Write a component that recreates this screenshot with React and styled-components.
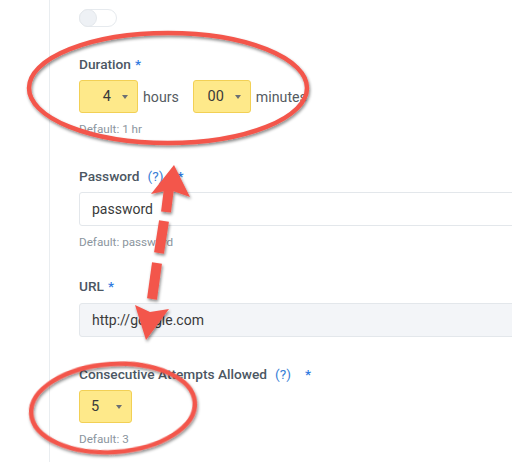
import React from 'react';
import styled, { createGlobalStyle } from 'styled-components';

const GlobalStyle = createGlobalStyle`
	body {
		margin: 0;
		background: #fff;
		font-family: Roboto, 'Liberation Sans', sans-serif;
		overflow: hidden;
	}
`;

const Page = styled.div`
	position: relative;
	width: 512px;
	height: 462px;
	display: flex;
	overflow: hidden;
`;

const Rail = styled.div`
	width: 49px;
	flex-shrink: 0;
	border-right: 1px solid #e9edf0;
`;

const Form = styled.div`
	flex: 1;
	padding: 9px 0 0 29px;
	display: flex;
	flex-direction: column;
`;

const Toggle = styled.div`
	width: 38px;
	height: 18px;
	border: 1px solid #e6eaee;
	border-radius: 10px;
	box-sizing: border-box;
	margin-bottom: 29px;
	display: flex;
	align-items: center;
`;

const Knob = styled.div`
	width: 18px;
	height: 18px;
	margin-left: -1px;
	border-radius: 50%;
	background: #eef1f5;
	border: 1px solid #e4e8ec;
	box-sizing: border-box;
`;

const Field = styled.div`
	display: flex;
	flex-direction: column;
	align-items: flex-start;
	margin-bottom: ${(p) => p.$gap || 30}px;
`;

const Label = styled.div`
	font-size: 13.7px;
	line-height: 16px;
	font-weight: 500;
	color: #4c5763;
	margin-bottom: ${(p) => p.$space || 8}px;
	display: flex;
	align-items: center;
`;

const Hint = styled.span`
	color: #3a7fd6;
	font-weight: 400;
	margin-left: 8px;
`;

const Star = styled.span`
	color: #2f7be0;
	margin-left: ${(p) => p.$space || 4}px;
`;

const Row = styled.div`
	display: flex;
	align-items: center;
`;

const Select = styled.div`
	width: ${(p) => p.$width}px;
	height: 33px;
	box-sizing: border-box;
	background: #fee98a;
	border: 1px solid #f2d055;
	border-radius: 3px;
	display: flex;
	align-items: center;
	justify-content: ${(p) => (p.$left ? 'space-between' : 'flex-end')};
	padding: 0 9px 0 ${(p) => (p.$left ? 11 : 0)}px;
	gap: 11px;
	font-size: 14.5px;
	color: #3a3a3a;
`;

const Caret = styled.span`
	width: 0;
	height: 0;
	border-left: 3.5px solid transparent;
	border-right: 3.5px solid transparent;
	border-top: 4px solid #6b6f73;
`;

const Unit = styled.span`
	font-size: 14.2px;
	color: #555b61;
	margin: 0 14px 0 5px;
`;

const Input = styled.div`
	align-self: stretch;
	margin-right: -20px;
	height: 34px;
	box-sizing: border-box;
	border: 1px solid #e3e7eb;
	border-radius: 3px;
	background: ${(p) => (p.$disabled ? '#f3f5f8' : '#fff')};
	padding-left: 12px;
	display: flex;
	align-items: center;
	font-size: 14px;
	color: #3a3a3a;
`;

const Help = styled.div`
	font-size: 11.7px;
	line-height: 15px;
	color: #8b959e;
	margin-top: 9px;
`;

const Overlay = styled.svg`
	position: absolute;
	left: 0;
	top: 0;
	pointer-events: none;
`;

const Annotations = () => (
	<Overlay width="512" height="462" viewBox="0 0 512 462">
		<defs>
			<filter id="shade" x="-10%" y="-10%" width="120%" height="130%">
				<feDropShadow dx="1" dy="2" stdDeviation="1.4" floodColor="#000" floodOpacity="0.45" />
			</filter>
		</defs>
		<g filter="url(#shade)" stroke="#f3564c" fill="none">
			<ellipse cx="168" cy="88" rx="139" ry="55" strokeWidth="4.5" />
			<ellipse cx="113" cy="408" rx="82" ry="44" strokeWidth="4.5" transform="rotate(-4 113 408)" />
			<g strokeWidth="10">
				<line x1="169" y1="188" x2="166" y2="212" />
				<line x1="164" y1="221" x2="159" y2="253" />
				<line x1="157" y1="263" x2="152" y2="299" />
			</g>
			<g fill="#f3564c" stroke="none">
				<polygon points="174,165 190,197 170,190 151,194" />
				<polygon points="146,340 135,305 150,312 169,309" />
			</g>
		</g>
	</Overlay>
);

const App = () => (
	<Page>
		<GlobalStyle />
		<Rail />
		<Form>
			<Toggle>
				<Knob />
			</Toggle>
			<Field $gap={31}>
				<Label>
					Duration<Star>*</Star>
				</Label>
				<Row>
					<Select $width={59}>
						4<Caret />
					</Select>
					<Unit>hours</Unit>
					<Select $width={58}>
						00<Caret />
					</Select>
					<Unit>minutes</Unit>
				</Row>
				<Help>Default: 1 hr</Help>
			</Field>
			<Field $gap={28}>
				<Label>
					Password<Hint>(?)</Hint>
					<Star $space={14}>*</Star>
				</Label>
				<Input>password</Input>
				<Help>Default: password</Help>
			</Field>
			<Field $gap={29}>
				<Label $space={9}>
					URL<Star>*</Star>
				</Label>
				<Input $disabled>http://google.com</Input>
			</Field>
			<Field>
				<Label>
					Consecutive Attempts Allowed<Hint>(?)</Hint>
					<Star $space={14}>*</Star>
				</Label>
				<Select $width={53} $left>
					5<Caret />
				</Select>
				<Help>Default: 3</Help>
			</Field>
		</Form>
		<Annotations />
	</Page>
);

export default App;
